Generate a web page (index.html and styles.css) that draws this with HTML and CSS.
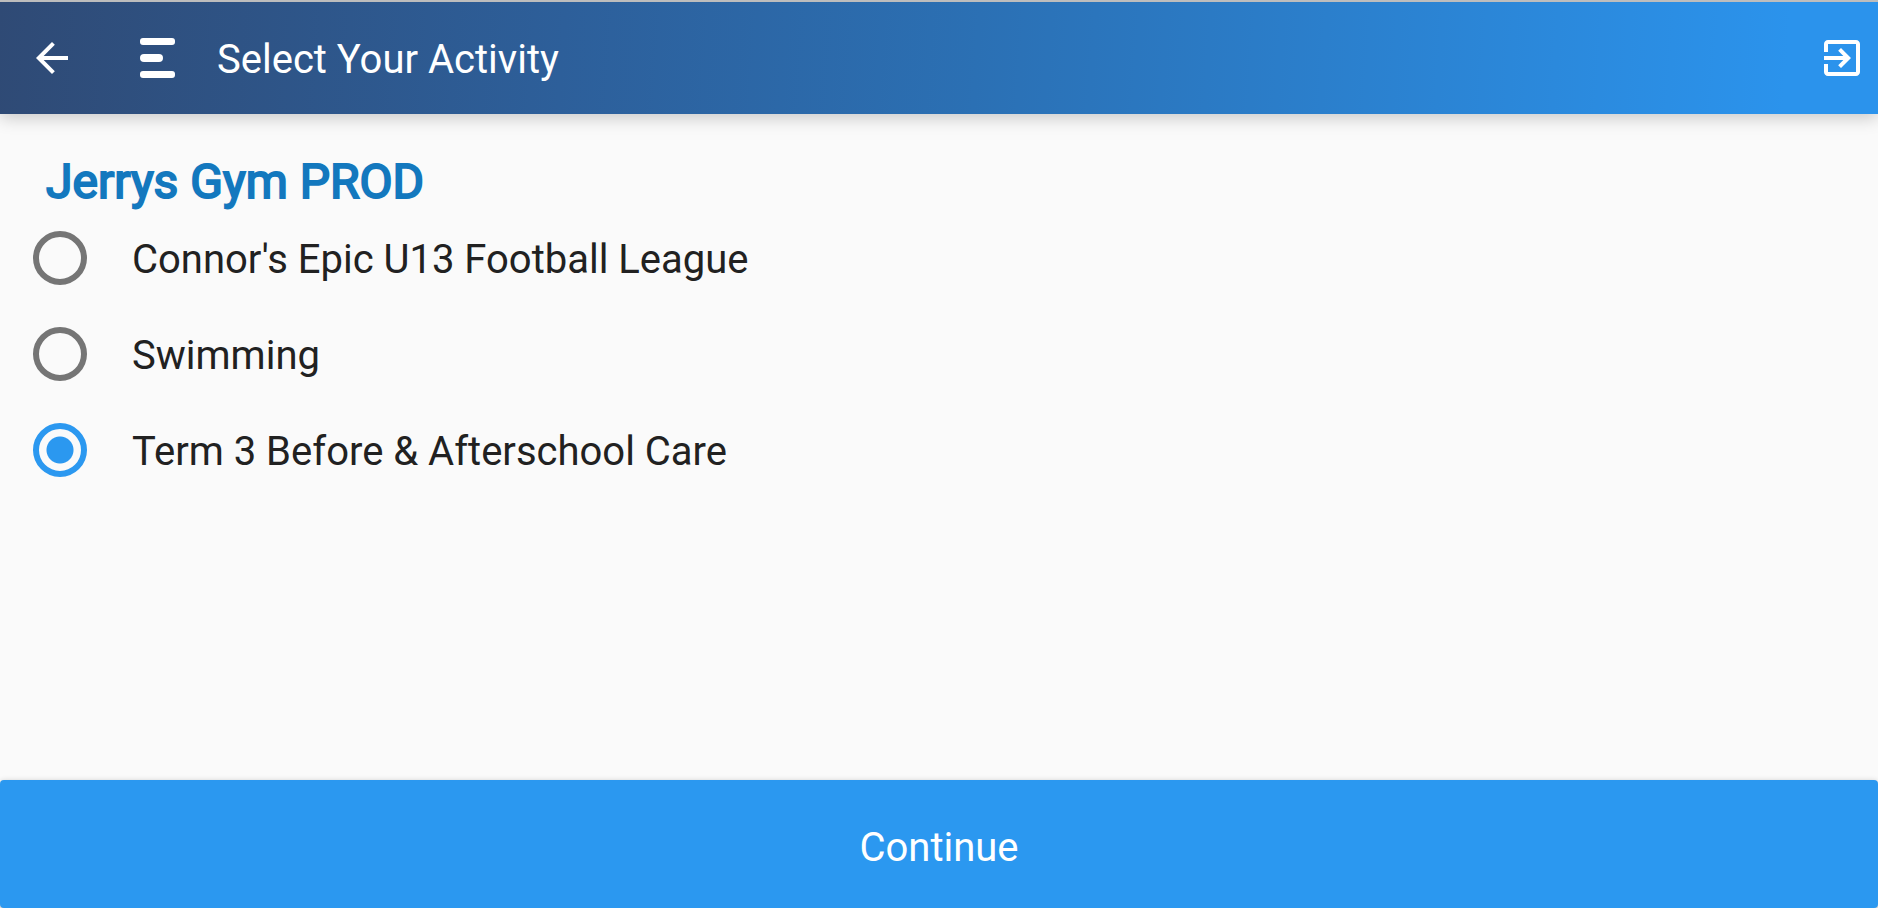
FILE: index.html
```html
<!DOCTYPE html>
<html lang="en">
<head>
  <meta charset="UTF-8" />
  <meta name="viewport" content="width=device-width, initial-scale=1.0" />
  <title>Select Your Activity</title>
  <link rel="stylesheet" href="styles.css">
</head>
<body>
  <header class="header">
    <button type="button" class="icon-btn" aria-label="Back">
      <svg viewBox="0 0 24 24"><path d="M20 11H7.83l5.59-5.59L12 4l-8 8 8 8 1.41-1.41L7.83 13H20v-2z"/></svg>
    </button>
    <svg class="logo" viewBox="0 0 35 40" aria-hidden="true">
      <rect width="35" height="7" rx="3"/>
      <rect y="16" width="23" height="8" rx="4"/>
      <rect y="33" width="35" height="7" rx="3"/>
    </svg>
    <h1 class="title">Select Your Activity</h1>
    <button type="button" class="icon-btn" aria-label="Log out">
      <svg viewBox="0 0 24 24"><path d="M10.09 15.59L11.5 17l5-5-5-5-1.41 1.41L12.67 11H3v2h9.67l-2.58 2.59zM19 3H5c-1.11 0-2 .9-2 2v4h2V5h14v14H5v-4H3v4c0 1.1.89 2 2 2h14c1.1 0 2-.9 2-2V5c0-1.1-.9-2-2-2z"/></svg>
    </button>
  </header>
  <form class="activity-form">
    <main class="activities">
      <h2 class="club" id="clubName">Jerrys Gym PROD</h2>
      <div role="radiogroup" aria-labelledby="clubName">
        <label class="activity">
          <input type="radio" name="activity" value="football" />
          <span class="activity-name">Connor's Epic U13 Football League</span>
        </label>
        <label class="activity">
          <input type="radio" name="activity" value="swimming" />
          <span class="activity-name">Swimming</span>
        </label>
        <label class="activity">
          <input type="radio" name="activity" value="care" checked />
          <span class="activity-name">Term 3 Before &amp; Afterschool Care</span>
        </label>
      </div>
    </main>
    <button type="submit" class="continue">Continue</button>
  </form>
</body>
</html>
```
FILE: styles.css
```css
:root {
  --blue: #2b98f0;
  --navy: #2f4a75;
  --heading: #1378be;
  --text-color: #212121;
  --bg: #fafafa;
}

* {
  box-sizing: border-box;
}

html, body {
  height: 100%;
  margin: 0;
}

body {
  font-family: Roboto, sans-serif;
  font-size: 40px;
  line-height: 48px;
  background: var(--bg);
  color: var(--text-color);
  display: flex;
  flex-direction: column;
}

/* Header */

.header {
  display: flex;
  align-items: center;
  flex-shrink: 0;
  padding: 32px 12px 32px 28px;
  border-top: 2px solid #bdbdbd;
  background: linear-gradient(94deg, var(--navy), #2d5f9a 30%, #2b70b4 52%, #2b93ec 95%);
  background-clip: padding-box;
  box-shadow: 0 4px 16px rgba(0, 0, 0, 0.2);
  color: #fff;
}

.icon-btn {
  width: 48px;
  height: 48px;
  padding: 0;
  border: none;
  background: none;
  color: inherit;
  cursor: pointer;
}

.icon-btn svg {
  display: block;
  width: 48px;
  height: 48px;
  fill: currentColor;
}

.logo {
  width: 35px;
  height: 40px;
  margin: 0 42px 0 64px;
  fill: currentColor;
}

.title {
  flex: 1;
  margin: 0;
  font-size: 40px;
  font-weight: 400;
}

.title,
.activity-name {
  padding-top: 3px;
}

.title {
  line-height: 45px;
}

/* Activity list */

.activity-form {
  flex: 1;
  display: flex;
  flex-direction: column;
}

.activities {
  flex: 1;
}

.club {
  margin: 0;
  padding: 40px 46px 0;
  font-size: 48px;
  line-height: 56px;
  font-weight: 400;
  -webkit-text-stroke: 2px var(--heading);
  color: var(--heading);
}

.activity {
  display: flex;
  align-items: center;
  gap: 45px;
  height: 96px;
  padding: 0 33px;
  cursor: pointer;
}

.activity input {
  appearance: none;
  flex-shrink: 0;
  width: 54px;
  height: 54px;
  margin: 0;
  border: 6px solid #757575;
  border-radius: 50%;
  cursor: pointer;
}

.activity input:checked {
  border-color: var(--blue);
  background: radial-gradient(circle, var(--blue) 13px, transparent 14px);
}

.continue {
  height: 128px;
  padding: 8px 0 0;
  border: none;
  border-radius: 4px;
  background: var(--blue);
  box-shadow: 0 2px 6px rgba(0, 0, 0, 0.3);
  color: #fff;
  font: inherit;
  cursor: pointer;
}
```
